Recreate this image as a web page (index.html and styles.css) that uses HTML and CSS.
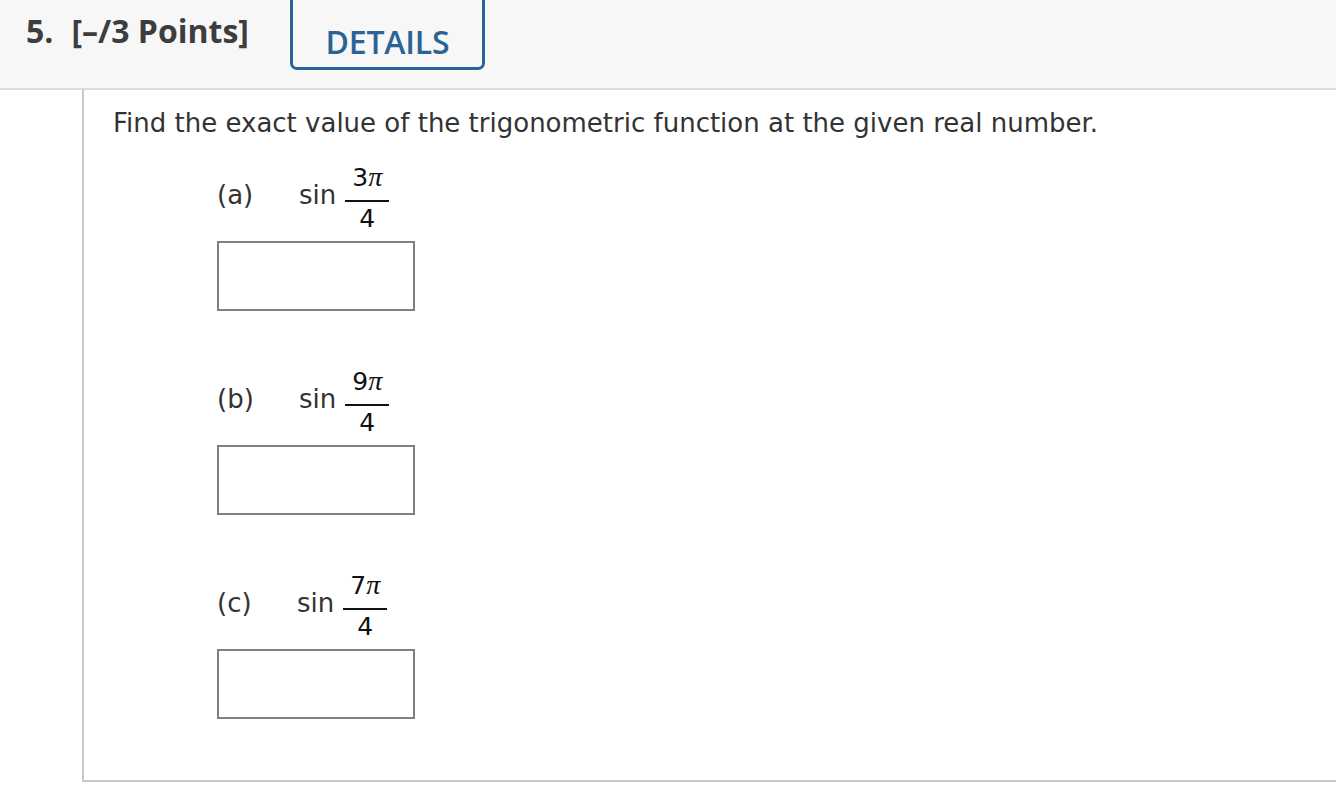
FILE: index.html
```html
<!DOCTYPE html>
<html>
<head>
<meta charset="utf-8">
<link rel="stylesheet" href="styles.css">
</head>
<body>
<div class="header">
  <div class="title"><span class="qnum">5.</span><span>[–/3 Points]</span></div>
  <div class="details">DETAILS</div>
</div>
<div class="content">
  <p class="prompt">Find the exact value of the trigonometric function at the given real number.</p>

  <div class="part">
    <div class="part-q">
      <span class="label">(a)</span>
      <span class="fn">sin</span>
      <span class="frac"><span class="num">3<i class="pi">π</i></span><span class="rule"></span><span class="den">4</span></span>
    </div>
    <div class="answer-box"></div>
  </div>

  <div class="part">
    <div class="part-q">
      <span class="label">(b)</span>
      <span class="fn">sin</span>
      <span class="frac"><span class="num">9<i class="pi">π</i></span><span class="rule"></span><span class="den">4</span></span>
    </div>
    <div class="answer-box"></div>
  </div>

  <div class="part">
    <div class="part-q">
      <span class="label label-c">(c)</span>
      <span class="fn">sin</span>
      <span class="frac"><span class="num">7<i class="pi">π</i></span><span class="rule"></span><span class="den">4</span></span>
    </div>
    <div class="answer-box"></div>
  </div>
</div>
</body>
</html>
```

FILE: styles.css
```css
html, body {
  margin: 0;
  padding: 0;
  background: #ffffff;
}

.header {
  height: 88px;
  background: #f7f7f7;
  border-bottom: 2px solid #dcdcdc;
  display: flex;
  align-items: flex-start;
  padding-left: 26px;
  font-family: "Open Sans", "Liberation Sans", sans-serif;
}

.title {
  font-weight: 700;
  font-size: 32px;
  line-height: 40px;
  color: #3d3d3d;
  margin-top: 11px;
  width: 264px;
  white-space: nowrap;
}

.qnum {
  margin-right: 18px;
}

.details {
  box-sizing: border-box;
  width: 195px;
  height: 70px;
  border: 3px solid #2a6496;
  border-top: none;
  border-radius: 0 0 7px 7px;
  color: #2a6496;
  font-size: 32px;
  font-weight: 600;
  line-height: 40px;
  text-align: center;
  padding-top: 22px;
  letter-spacing: -0.2px;
}

.content {
  margin-left: 82px;
  border-left: 2px solid #c8c8c8;
  border-bottom: 2px solid #c8c8c8;
  padding: 17px 0 61px 29px;
  font-family: "DejaVu Sans", Verdana, sans-serif;
  color: #333333;
}

.prompt {
  margin: 0;
  font-size: 26px;
  line-height: 32px;
}

.part {
  margin-left: 104px;
  margin-top: 26px;
}

.part + .part {
  margin-top: 58px;
}

.part-q {
  display: flex;
  align-items: flex-start;
  font-size: 26px;
  line-height: 32px;
}

.label {
  width: 82px;
  margin-top: 14px;
}

.label-c {
  width: 80px;
}

.fn {
  margin-top: 14px;
  margin-right: 9px;
}

.frac {
  display: flex;
  flex-direction: column;
  align-items: center;
  width: 44px;
  font-size: 25px;
  line-height: 24px;
  color: #111111;
}

.num {
  margin-bottom: 10px;
  white-space: nowrap;
}

.pi {
  font-family: "Liberation Serif", "Times New Roman", serif;
  font-size: 28px;
  font-style: italic;
}

.rule {
  align-self: stretch;
  height: 2px;
  background: #111111;
}

.den {
  margin-top: 5px;
}

.answer-box {
  box-sizing: border-box;
  width: 198px;
  height: 70px;
  border: 2px solid #808080;
  margin-top: 10px;
  background: #ffffff;
}
```
